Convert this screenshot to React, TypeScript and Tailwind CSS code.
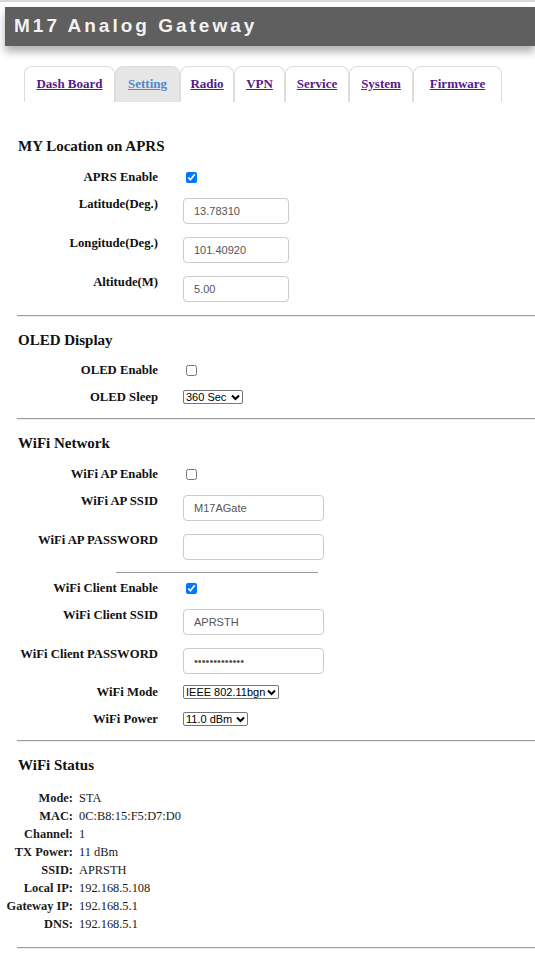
import React from "react";

const SERIF = "font-['Liberation_Serif','Times_New_Roman',serif]";
const SANS = "font-['Liberation_Sans',Arial,sans-serif]";

function Label({ children }: { children: React.ReactNode }) {
  return (
    <div className={`${SERIF} text-[12.7px] font-bold leading-[14px] text-right text-[#111]`}>
      {children}
    </div>
  );
}

function Heading({ children, className }: { children: React.ReactNode; className: string }) {
  return (
    <div className={`${SERIF} ml-[18px] text-[15px] font-bold leading-[18px] text-[#111] ${className}`}>
      {children}
    </div>
  );
}

function CheckRow({ label, checked, className }: { label: string; checked: boolean; className: string }) {
  return (
    <div className={`grid grid-cols-[158px_1fr] gap-x-[25px] h-[14px] items-center ${className}`}>
      <Label>{label}</Label>
      <div className="flex items-center">
        <input type="checkbox" defaultChecked={checked} className="m-0 ml-[3px] w-[11px] h-[11px]" />
      </div>
    </div>
  );
}

function InputRow({
  label,
  value,
  widthClass,
  type = "text",
  className,
}: {
  label: string;
  value: string;
  widthClass: string;
  type?: string;
  className: string;
}) {
  return (
    <div className={`grid grid-cols-[158px_1fr] gap-x-[25px] h-[26px] items-start ${className}`}>
      <Label>{label}</Label>
      <div>
        <input
          type={type}
          defaultValue={value}
          className={`${SANS} ${widthClass} h-[26px] border border-[#cccccc] rounded-[4px] px-[10px] text-[11px] text-[#555] outline-none`}
        />
      </div>
    </div>
  );
}

function SelectRow({
  label,
  value,
  widthClass,
  className,
}: {
  label: string;
  value: string;
  widthClass: string;
  className: string;
}) {
  return (
    <div className={`grid grid-cols-[158px_1fr] gap-x-[25px] h-[14px] items-center ${className}`}>
      <Label>{label}</Label>
      <div className="flex items-center">
        <div
          className={`${SANS} ${widthClass} inline-flex items-center justify-between h-[14px] border border-[#767676] rounded-[2px] pl-[2px] pr-[2px] text-[11px] leading-none text-black`}
        >
          <span>{value}</span>
          <svg width="9" height="7" viewBox="0 0 9 7">
            <path d="M1 1.5 L4.5 5 L8 1.5" stroke="black" strokeWidth="2" fill="none" />
          </svg>
        </div>
      </div>
    </div>
  );
}

function Hr({ className }: { className: string }) {
  return <div className={`ml-[17px] h-[2px] border-t border-t-[#9a9a9a] border-b border-b-[#eeeeee] ${className}`} />;
}

const tabs: { name: string; w: string; active?: boolean }[] = [
  { name: "Dash Board", w: "w-[91px]" },
  { name: "Setting", w: "w-[65px]", active: true },
  { name: "Radio", w: "w-[54px]" },
  { name: "VPN", w: "w-[51px]" },
  { name: "Service", w: "w-[64px]" },
  { name: "System", w: "w-[64px]" },
  { name: "Firmware", w: "w-[89px]" },
];

const status: [string, string][] = [
  ["Mode:", "STA"],
  ["MAC:", "0C:B8:15:F5:D7:D0"],
  ["Channel:", "1"],
  ["TX Power:", "11 dBm"],
  ["SSID:", "APRSTH"],
  ["Local IP:", "192.168.5.108"],
  ["Gateway IP:", "192.168.5.1"],
  ["DNS:", "192.168.5.1"],
];

export default function App() {
  return (
    <div className="w-[535px] min-h-[961px] bg-white border-t-2 border-t-[#d9d9d9] overflow-hidden pb-[12px]">
      {/* Title bar */}
      <div className="mt-[5px] ml-[5px] h-[39px] bg-[#5f5f5f] shadow-[0_6px_8px_rgba(0,0,0,0.3)] flex items-center pl-[9px]">
        <span className={`${SANS} text-[19px] font-bold tracking-[3px] text-[#f2f2f2]`}>M17 Analog Gateway</span>
      </div>

      {/* Tabs */}
      <div className="mt-[20px] ml-[24px] flex h-[36px]">
        {tabs.map((t) => (
          <div
            key={t.name}
            className={`${t.w} h-[36px] border border-[#dddddd] border-b-0 rounded-t-[8px] flex items-center justify-center pb-[1px] ${
              t.active ? "bg-[#e6e6e6]" : "bg-white"
            }`}
          >
            <a
              href="#"
              className={`${SERIF} text-[13px] font-bold underline ${t.active ? "text-[#5089c6]" : "text-[#551a8b]"}`}
            >
              {t.name}
            </a>
          </div>
        ))}
      </div>

      {/* MY Location on APRS */}
      <Heading className="mt-[35px]">MY Location on APRS</Heading>
      <CheckRow label="APRS Enable" checked className="mt-[15px]" />
      <InputRow label="Latitude(Deg.)" value="13.78310" widthClass="w-[106px]" className="mt-[13px]" />
      <InputRow label="Longitude(Deg.)" value="101.40920" widthClass="w-[106px]" className="mt-[13px]" />
      <InputRow label="Altitude(M)" value="5.00" widthClass="w-[106px]" className="mt-[13px]" />
      <Hr className="mt-[14px]" />

      {/* OLED Display */}
      <Heading className="mt-[14px]">OLED Display</Heading>
      <CheckRow label="OLED Enable" checked={false} className="mt-[14px]" />
      <SelectRow label="OLED Sleep" value="360 Sec" widthClass="w-[60px]" className="mt-[13px]" />
      <Hr className="mt-[14px]" />

      {/* WiFi Network */}
      <Heading className="mt-[14px]">WiFi Network</Heading>
      <CheckRow label="WiFi AP Enable" checked={false} className="mt-[15px]" />
      <InputRow label="WiFi AP SSID" value="M17AGate" widthClass="w-[141px]" className="mt-[13px]" />
      <InputRow label="WiFi AP PASSWORD" value="" type="password" widthClass="w-[141px]" className="mt-[13px]" />
      <div className="mt-[13px] ml-[116px] w-[202px] h-px bg-[#999999]" />
      <CheckRow label="WiFi Client Enable" checked className="mt-[8px]" />
      <InputRow label="WiFi Client SSID" value="APRSTH" widthClass="w-[141px]" className="mt-[13px]" />
      <InputRow
        label="WiFi Client PASSWORD"
        value="aprsthpassw0r"
        type="password"
        widthClass="w-[141px]"
        className="mt-[13px]"
      />
      <SelectRow label="WiFi Mode" value="IEEE 802.11bgn" widthClass="w-[96px]" className="mt-[12px]" />
      <SelectRow label="WiFi Power" value="11.0 dBm" widthClass="w-[65px]" className="mt-[13px]" />
      <Hr className="mt-[14px]" />

      {/* WiFi Status */}
      <Heading className="mt-[14px]">WiFi Status</Heading>
      <div className={`${SERIF} mt-[15px] grid grid-cols-[73px_1fr] gap-x-[6px] text-[12.4px] leading-[18px] text-[#1a1a1a]`}>
        {status.map(([k, v]) => (
          <React.Fragment key={k}>
            <div className="text-right font-bold whitespace-nowrap">{k}</div>
            <div>{v}</div>
          </React.Fragment>
        ))}
      </div>
      <Hr className="mt-[14px]" />
    </div>
  );
}
